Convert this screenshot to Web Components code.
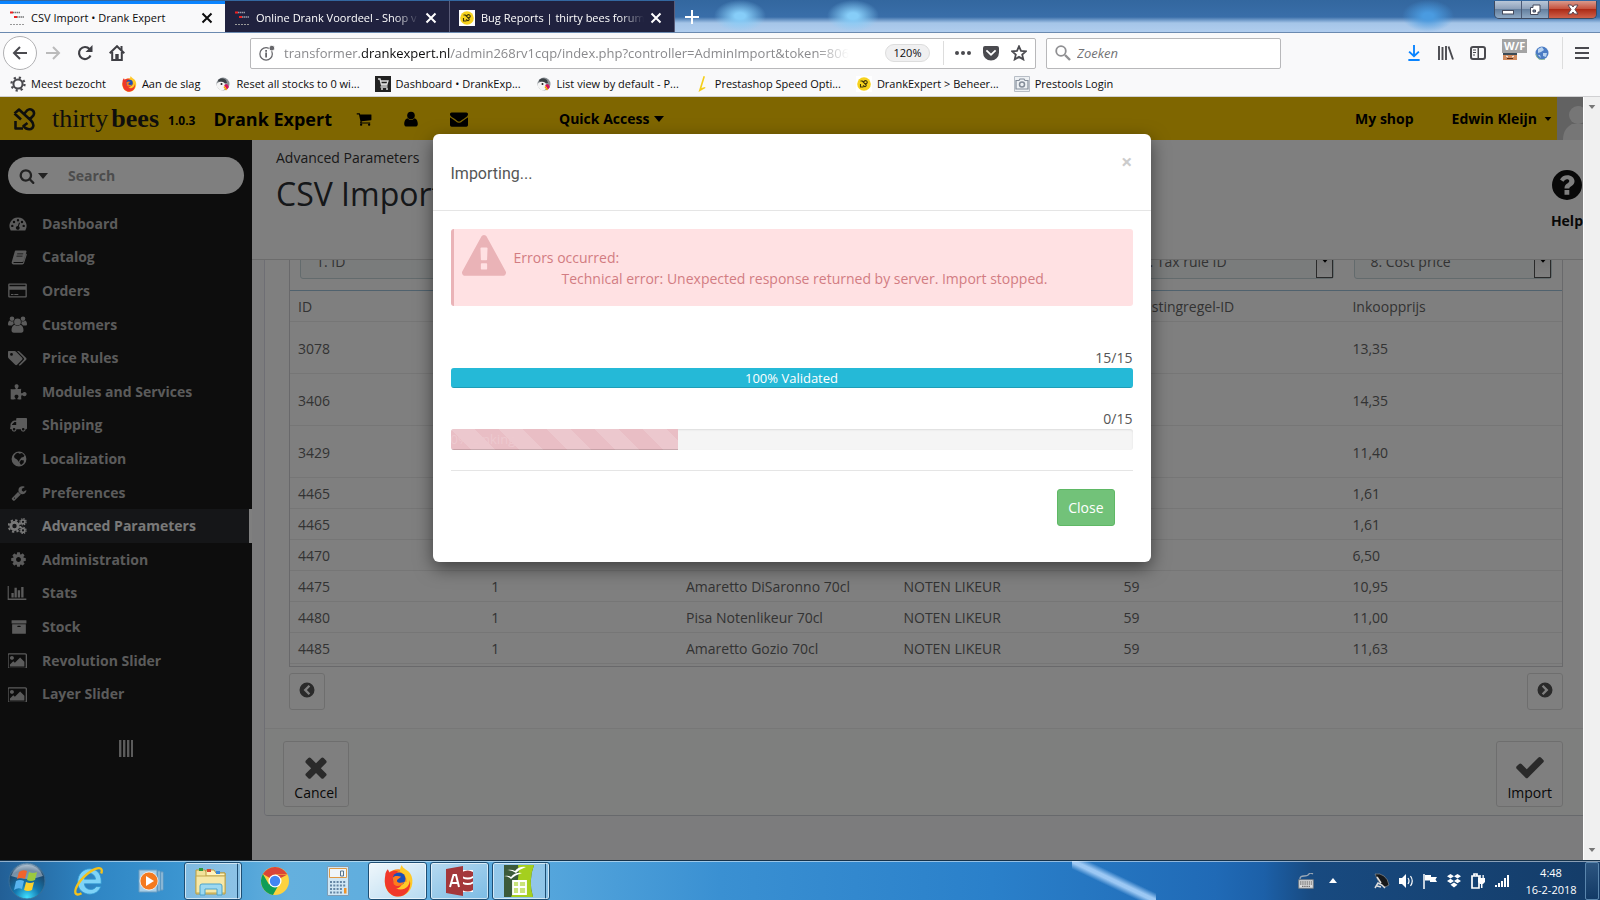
<!DOCTYPE html>
<html lang="en">
<head>
<meta charset="utf-8">
<title>CSV Import • Drank Expert</title>
<style>
  html, body { height: 100%; margin: 0; }
  body { font: 14px/20px "Open Sans", "Noto Sans", sans-serif; color: #666; overflow: hidden; }
</style>
</head>
<body>
<desktop-shell></desktop-shell>

<script>
const glyphs = {
  search: ['0 0 1792 1792', '<path d="M1216 832q0-185-131.5-316.5t-316.5-131.5-316.5 131.5-131.5 316.5 131.5 316.5 316.5 131.5 316.5-131.5 131.5-316.5zm512 832q0 52-38 90t-90 38q-54 0-90-38l-343-342q-179 124-399 124-143 0-273.5-55.5t-225-150-150-225-55.5-273.5 55.5-273.5 150-225 225-150 273.5-55.5 273.5 55.5 225 150 150 225 55.5 273.5q0 220-124 399l343 343q37 37 37 90z"/>'],
  envelope: ['0 0 1792 1792', '<path d="M1792 710v794q0 66-47 113t-113 47h-1472q-66 0-113-47t-47-113v-794q44 49 101 87 362 246 497 345 57 42 92.5 65.5t94.5 48 110 24.5h2q51 0 110-24.5t94.5-48 92.5-65.5q170-123 498-345 57-39 100-87zm0-294q0 79-49 151t-122 123q-376 261-468 325-10 7-42.5 31t-54 38.5-52 32.5-57.5 27-50 9h-2q-23 0-50-9t-57.5-27-52-32.5-54-38.5-42.5-31q-91-64-262-182.5t-205-142.5q-62-42-117-115.5t-55-136.5q0-78 41.5-130t118.5-52h1472q65 0 112.5 47t47.5 113z"/>'],
  cart: ['0 0 1792 1792', '<path d="M704 1536q0 52-38 90t-90 38-90-38-38-90 38-90 90-38 90 38 38 90zm896 0q0 52-38 90t-90 38-90-38-38-90 38-90 90-38 90 38 38 90zm128-1088v512q0 24-16.5 42.5t-40.5 21.5l-1044 122q13 60 13 70 0 16-24 64h920q26 0 45 19t19 45-19 45-45 19h-1024q-26 0-45-19t-19-45q0-11 8-31.5t16-36 21.5-40 15.5-29.5l-177-823h-204q-26 0-45-19t-19-45 19-45 45-19h256q16 0 28.5 6.5t19.5 15.5 13 24.5 8 26 5.5 29.5 4.5 26h1201q26 0 45 19t19 45z"/>'],
  user: ['0 0 16 16', '<circle cx="8" cy="4.6" r="3.8"/><path d="M4.6 7.2C2 7.8 1.2 10.500 1.200 13c0 1.600 1 2.600 2.600 2.600h8.400c1.600 0 2.600-1 2.600-2.600 0-2.500-.8-5.200-3.400-5.800C10.500 8.300 9.300 9 8 9S5.500 8.300 4.600 7.200z"/>'],
  times: ['0 0 1792 1792', '<path d="M1490 1322q0 40-28 68l-136 136q-28 28-68 28t-68-28l-294-294-294 294q-28 28-68 28t-68-28l-136-136q-28-28-28-68t28-68l294-294-294-294q-28-28-28-68t28-68l136-136q28-28 68-28t68 28l294 294 294-294q28-28 68-28t68 28l136 136q28 28 28 68t-28 68l-294 294 294 294q28 28 28 68z"/>'],
  check: ['0 0 1792 1792', '<path d="M1671 566q0 40-28 68l-724 724-136 136q-28 28-68 28t-68-28l-136-136-362-362q-28-28-28-68t28-68l136-136q28-28 68-28t68 28l294 295 656-657q28-28 68-28t68 28l136 136q28 28 28 68z"/>'],
  warning: ['0 0 1792 1792', '<path d="M1024 1375v-190q0-14-9.5-23.5t-22.5-9.5h-192q-13 0-22.5 9.5t-9.5 23.5v190q0 14 9.5 23.5t22.5 9.5h192q13 0 22.5-9.5t9.5-23.5zm-2-374l18-459q0-12-10-19-13-11-24-11h-220q-11 0-24 11-10 7-10 21l17 457q0 10 10 16.5t24 6.5h185q14 0 23.5-6.5t10.5-16.5zm-14-934l768 1408q35 63-2 126-17 29-46.500 46t-63.500 17h-1536q-34 0-63.500-17t-46.500-46q-37-63-2-126l768-1408q17-31 47-49t65-18 65 18 47 49z"/>'],
  wrench: ['0 0 1792 1792', '<path d="M448 1472q0-26-19-45t-45-19-45 19-19 45 19 45 45 19 45-19 19-45zm644-420l-682 682q-37 37-90 37-52 0-91-37l-106-108q-38-36-38-90 0-53 38-91l681-681q39 98 114.5 173.5t173.5 114.5zm634-435q0 39-23 106-47 134-164.5 217.5t-258.5 83.5q-185 0-316.5-131.5t-131.5-316.5 131.5-316.5 316.5-131.5q58 0 121.5 16.5t107.5 46.5q16 11 16 28t-16 28l-293 169v224l193 107q5-3 79-48.5t135.5-81 70.5-35.5q15 0 23.5 10t8.5 25z"/>'],
  cog: ['0 0 1792 1792', '<path d="M1152 896q0-106-75-181t-181-75-181 75-75 181 75 181 181 75 181-75 75-181zm512-109v222q0 12-8 23t-20 13l-185 28q-19 54-39 91 35 50 107 138 10 12 10 25t-9 23q-27 37-99 108t-94 71q-12 0-26-9l-138-108q-44 23-91 38-16 136-29 186-7 28-36 28h-222q-14 0-24.500-8.500t-11.500-21.500l-28-184q-49-16-90-37l-141 107q-10 9-25 9-14 0-25-11-126-114-165-168-7-10-7-23 0-12 8-23 15-21 51-66.500t54-70.500q-27-50-41-99l-183-27q-13-2-21-12.500t-8-23.500v-222q0-12 8-23t19-13l186-28q14-46 39-92-40-57-107-138-10-12-10-24 0-10 9-23 26-36 98.500-107.500t94.500-71.500q13 0 26 10l138 107q44-23 91-38 16-136 29-186 7-28 36-28h222q14 0 24.500 8.500t11.500 21.500l28 184q49 16 90 37l142-107q9-9 24-9 13 0 25 10 129 119 165 170 7 8 7 22 0 12-8 23-15 21-51 66.500t-54 70.500q26 50 41 98l183 28q13 2 21 12.500t8 23.500z"/>'],
  cogs: ['0 0 19 16', '<circle cx="6.500" cy="8" r="3.600" fill="none" stroke="currentColor" stroke-width="2.800"/><circle cx="6.500" cy="8" r="5.800" fill="none" stroke="currentColor" stroke-width="2" stroke-dasharray="2.300 2.255"/><g fill="none" stroke="currentColor"><circle cx="15" cy="3.800" r="1.900" stroke-width="1.500"/><circle cx="15" cy="3.800" r="3.100" stroke-width="1.200" stroke-dasharray="1.400 1.035"/><circle cx="15" cy="12.400" r="1.900" stroke-width="1.500"/><circle cx="15" cy="12.400" r="3.100" stroke-width="1.200" stroke-dasharray="1.400 1.035"/></g>'],
  dashboard: ['0 0 18 16', '<path fill-rule="evenodd" d="M9 1.500a8.500 8.500 0 0 0-7.300 12.900h14.600A8.500 8.500 0 0 0 9 1.500zM3.300 8.700a1.200 1.200 0 1 0 0 2.400 1.200 1.200 0 0 0 0-2.400zM5 4.800a1.200 1.200 0 1 0 0 2.400 1.200 1.200 0 0 0 0-2.400zM9 3a1.200 1.200 0 1 0 0 2.400A1.200 1.200 0 0 0 9 3zm4 1.800a1.200 1.200 0 1 0 0 2.400 1.200 1.200 0 0 0 0-2.400zm1.700 3.900a1.200 1.200 0 1 0 0 2.400 1.200 1.200 0 0 0 0-2.400zM10 6.500 8.800 10a1.900 1.900 0 1 0 1 .3L11 7z"/>'],
  book: ['0 0 16 16', '<path fill-rule="evenodd" d="M5 1.500h9.300c.9 0 1.400.6 1.100 1.400L12.500 12c-.2.700-.9 1.100-1.600 1.100H3c-.7 0-.9.600 0 .900h9l3-9.500c.800.400.9.900.7 1.600L13 14.300c-.2.700-.9 1.200-1.600 1.200H2.500C1 15.500.3 14 .8 12.700L3.700 2.700C3.900 2 4.300 1.500 5 1.500zm1.300 3-.2.800h6l.2-.8zm-.7 2.200-.2.800h6l.2-.8z"/>'],
  card: ['0 0 19 15', '<path fill-rule="evenodd" d="M1.200.500h16.600q1 0 1 1v12q0 1-1 1H1.200q-1 0-1-1v-12q0-1 1-1zm.3 1.200v1.500h16V1.700zm0 5v6.600h16V6.700zM3 11h2.500v1H3zm3.300 0h4v1h-4z"/>'],
  users: ['0 0 19 17', '<circle cx="9.500" cy="6" r="3.400"/><circle cx="4" cy="2.800" r="2.300"/><circle cx="15" cy="2.800" r="2.300"/><path d="M6.800 8.800C4.500 9.200 3.500 12 3.500 14.300c0 1.600.8 2.500 2.300 2.500h7.400c1.500 0 2.300-.9 2.300-2.500 0-2.300-1-5.100-3.300-5.500-1.600 1.700-3.800 1.700-5.400 0zM1.800 4.500C.5 5 0 6.500 0 8.200 0 9 .5 9.500 1.200 9.500h2.900c.5-.8 1-1.200 1.700-1.500A4.600 4.600 0 0 1 5.500 5c-1.200.7-2.600.5-3.700-.5zm15.400 0c1.300.5 1.800 2 1.800 3.700 0 .8-.5 1.300-1.200 1.300h-2.900c-.5-.8-1-1.200-1.700-1.500a4.600 4.600 0 0 0 .3-3c1.200.7 2.600.5 3.700-.5z"/>'],
  tags: ['0 0 19 15', '<path fill-rule="evenodd" d="M1 0h5.500c.6 0 1.200.300 1.600.700l6 6.100c.6.600.6 1.300 0 1.900l-5 5.100c-.6.500-1.300.5-1.900 0L.800 7.500C.300 7 0 6.400 0 5.800V1c0-.6.400-1 1-1zm2.500 2a1.400 1.400 0 1 0 0 2.800 1.400 1.400 0 0 0 0-2.800zM9 0h1c.7 0 1.300.3 1.700.7l6.500 6.200c.5.600.5 1.200 0 1.800l-5.400 5.400c-.8.700-1.500.5-2.100-.1l5-5.200c.5-.6.5-1.300 0-1.900z"/>'],
  puzzle: ['0 0 17 16', '<path d="M5.800 5C5.600 4 4.600 3.600 4.600 2.300 4.600.900 5.700.300 6.600.300s2 .6 2 2C8.600 3.500 7.600 4 7.500 5c1 .2 2.700 0 3.700-.2-.1 1.500-.4 3-.1 4 .2.800 1 .6 1.500.1.600-.6 1.300-.9 2-.9 1.300 0 2 1 2 2s-.7 2.200-2 2.200c-.8 0-1.300-.4-1.900-.8-.8-.5-1.400-.2-1.500.6-.1 1.100 0 2.300.2 3.200-1.600.3-3 .3-4.100.1-.3-1.300 1.200-1.500 1.200-2.900 0-1-.8-1.700-2-1.700s-2 .7-2 1.700c0 1.400 1.500 1.600 1.100 2.900-1.500.2-3 .2-4.900-.1V5c1.800.3 3.600.2 5.100 0z"/>'],
  truck: ['0 0 17 14', '<path fill-rule="evenodd" d="M7 0h9.200c.5 0 .8.300.8.800v9.500c0 .8-.7 1-1.400 1a2.400 2.400 0 1 1-4.800 0H6.500a2.400 2.400 0 1 1-4.800 0C.800 11.300 0 11.200 0 10.300c0-.5.500-.8.500-1.200 0-2-.2-3.400.7-4.400l1.600-1.600c.4-.4.900-.6 1.500-.6h1.900V.800C6.200.300 6.500 0 7 0zM6.200 4H4.400L2 6.400v.5h4.200zM4.100 10a1.300 1.300 0 1 0 0 2.600 1.300 1.300 0 0 0 0-2.600zm9.100 0a1.300 1.300 0 1 0 0 2.600 1.300 1.300 0 0 0 0-2.600z"/>'],
  globe: ['0 0 16 16', '<path fill-rule="evenodd" d="M8 .600a7.400 7.400 0 1 0 0 14.800A7.400 7.400 0 0 0 8 .600zM5 2.500l2-.700 1.500 1L11 2l2.500 2.500-1 1.500-2 .5L8.500 9 8 11 6 8.500 3.500 7 3 5zM10 9l3 .5-.5 2.500L10 14l-1.500-2.500z"/>'],
  chart: ['0 0 20 15', '<path d="M0 0h1.200v13.500H20V15H0zM4 7.500h2.500v4.800H4zM7.300 2h2.500v10.300H7.300zM10.800 4.500h2.500v7.800h-2.500zM14.500 1H17v11.300h-2.500z"/>'],
  archive: ['0 0 1792 1792', '<path d="M1088 832q0-26-19-45t-45-19h-256q-26 0-45 19t-19 45 19 45 45 19h256q26 0 45-19t19-45zm576-192v960q0 26-19 45t-45 19h-1408q-26 0-45-19t-19-45v-960q0-26 19-45t45-19h1408q26 0 45 19t19 45zm64-448v256q0 26-19 45t-45 19h-1536q-26 0-45-19t-19-45v-256q0-26 19-45t45-19h1536q26 0 45 19t19 45z"/>'],
  image: ['0 128 1856 1408', '<path d="M576 576q0 80-56 136t-136 56-136-56-56-136 56-136 136-56 136 56 56 136zm1024 384v448h-1408v-192l320-320 160 160 512-512zm96-704h-1600q-13 0-22.500 9.500t-9.500 22.500v1216q0 13 9.500 22.500t22.500 9.500h1600q13 0 22.500-9.500t9.500-22.500v-1216q0-13-9.500-22.500t-22.500-9.500zm160 32v1216q0 66-47 113t-113 47h-1600q-66 0-113-47t-47-113v-1216q0-66 47-113t113-47h1600q66 0 113 47t47 113z"/>'],
  prev: ['0 0 16 16', '<path fill-rule="evenodd" d="M8 .500a7.500 7.500 0 1 0 0 15 7.500 7.500 0 0 0 0-15zM9.600 3 11.200 4.600 7.900 8l3.300 3.400L9.600 13l-5-5z"/>'],
  next: ['0 0 16 16', '<path fill-rule="evenodd" d="M8 .500a7.500 7.500 0 1 1 0 15 7.500 7.500 0 0 1 0-15zM6.400 3 4.800 4.600 8.100 8l-3.300 3.400L6.400 13l5-5z"/>'],
  help: ['0 0 30 30', '<path fill-rule="evenodd" d="M15 0a15 15 0 1 0 0 30 15 15 0 0 0 0-30zM12.500 20h4.800v4.800h-4.800zM8 9.500C9.500 6.700 12 5.200 15.300 5.200c4 0 7.200 2.600 7.200 6 0 4.800-5.200 5-5.200 7.300h-4.800c0-5.300 4.800-5 4.800-7.600 0-1-1-1.700-2.300-1.700-1.500 0-2.500.9-3.600 2.500z"/>'],
  caret: ['0 0 10 6', '<path d="M0 0h10L5 6z"/>'],
  close: ['0 0 12 12', '<path d="M1.500 1.500 10.500 10.500M10.500 1.500 1.500 10.500" fill="none" stroke="currentColor" stroke-width="2"/>'],
  plus: ['0 0 14 14', '<path d="M7 0v14M0 7h14" fill="none" stroke="currentColor" stroke-width="2"/>'],
  back: ['0 0 16 16', '<path d="M15 8H2M8 2 2 8l6 6" fill="none" stroke="currentColor" stroke-width="2"/>'],
  forward: ['0 0 16 16', '<path d="M1 8h13M8 2l6 6-6 6" fill="none" stroke="currentColor" stroke-width="2"/>'],
  reload: ['0 0 16 16', '<path d="M13.500 10.500A6 6 0 1 1 12.500 4l1.500 1.800" fill="none" stroke="currentColor" stroke-width="2.200"/><path d="M15.500 0v7H8.500z"/>'],
  home: ['0 0 16 16', '<path d="M.700 8.300 8 1.200l7.300 7.100M3.200 7v8h9.600V7" fill="none" stroke="currentColor" stroke-width="2"/><path d="M6.300 9h3.400v6H6.300zM11.500 1h2v4h-2z"/>'],
  info: ['0 0 18 18', '<circle cx="8" cy="10" r="7" fill="none" stroke="currentColor" stroke-width="1.400"/><path d="M7 8.500h2V14H7zM7 5.500h2v2H7z"/><circle cx="14.500" cy="3.500" r="3.200" stroke="#fff"/>'],
  dots: ['0 0 16 4', '<circle cx="2" cy="2" r="2"/><circle cx="8" cy="2" r="2"/><circle cx="14" cy="2" r="2"/>'],
  pocket: ['0 0 16 15', '<path fill-rule="evenodd" d="M2 .500h12q2 0 2 2V7a8 8 0 0 1-16 0V2.500q0-2 2-2zm2 3.700L2.800 5.500 8 10.600l5.200-5.100L12 4.200 8 8z"/>'],
  star: ['0 0 16 16', '<path d="m8 1.300 2 4.500 4.900.5-3.700 3.300 1.100 4.800L8 11.900l-4.300 2.500 1.100-4.800L1.100 6.300 6 5.800z" fill="none" stroke="currentColor" stroke-width="1.800"/>'],
  lens: ['0 0 16 16', '<path d="M10 10l5 5" stroke="currentColor" stroke-width="2.400"/><circle cx="6" cy="6" r="4.800" fill="none" stroke="currentColor" stroke-width="1.800"/>'],
  download: ['0 0 14 17', '<path d="M7 0v12M1.800 7 7 12l5.200-5M1 16h12" fill="none" stroke="currentColor" stroke-width="2"/>'],
  library: ['0 0 16 14', '<path d="M1 0v14M4.500 1v13M8 0v14M10.500.500l4.500 13" fill="none" stroke="currentColor" stroke-width="1.900"/>'],
  sidebar: ['0 0 16 14', '<rect x="1" y="1" width="14" height="12" rx="2" fill="none" stroke="currentColor" stroke-width="2"/><path d="M7.500 1h1.500v12H7.500zM3 3.500h3v1H3zM3 6h3v1H3zM3 8.500h2v1H3z"/>'],
  menu: ['0 0 14 12', '<path d="M0 0h14v2H0zM0 5h14v2H0zM0 10h14v2H0z"/>'],
  addon: ['0 0 16 16', '<path d="M1 2h14v13H1z" fill="#d08b5e"/><path d="M1 2h14v8H1z" fill="#3b4a55"/><path d="M4 11l2 1M12 11l-2 1" stroke="#fff"/><path d="M5 13.500h6" stroke="#5c2f18"/>'],
  world: ['0 0 14 14', '<circle cx="7" cy="7" r="6.500" fill="#4b7cc4"/><path d="M3 3l4-2 2 3-3 2-3 1zM8 7l4 0-1 4-3-1zM3 9l2 0 1 3z" fill="#b9d3ef"/><path d="M1 8a6 6 0 0 0 9 5" fill="none" stroke="#7fae8a"/>'],
  shop: ['0 0 16 16', '<path d="M1 2.500h3M5 7h3" stroke="#e22" stroke-width="2"/><path d="M4 2.500h7M8 7h7" stroke="currentColor" stroke-width="1.400" stroke-dasharray="1.500 .500" opacity=".550"/><path d="M1 14.500h14" stroke="#999" stroke-width="1" stroke-dasharray="2 1"/>'],
  bee: ['0 0 16 16', '<path d="M0 0h16v16H0z" fill="#fff"/><circle cx="8" cy="8" r="6.800" fill="#f7d21e"/><path d="M4.500 5h1.800l3.500 3.500c1 1 0 2.500-1.300 2L7 9.500M7.500 6l1-1C10 4 12 5.500 11 7L9.500 8M4.500 8v3h3" fill="none" stroke="#3a3208" stroke-width="1.100"/>'],
  gear: ['0 0 14 14', '<g fill="none" stroke="#4a4a4f"><circle cx="7" cy="7" r="4" stroke-width="1.800"/><circle cx="7" cy="7" r="5.700" stroke-width="2" stroke-dasharray="1.900 2.577"/></g>'],
  puffin: ['0 0 16 16', '<circle cx="8" cy="8" r="6.500" fill="#8b9196"/><path d="M3 4q4-3.500 8 0l1 3H4z" fill="#3c4246"/><path d="M1.500 9a4.500 3.500 0 0 1 8-2l1.500 5-3 2.500a6.500 6.500 0 0 1-6.500-5.500z" fill="#f4f4f4"/><circle cx="6.500" cy="8" r="1" fill="#222"/><path d="M9 9l3-1 2 3-2 2.500z" fill="#d6145a"/><path d="M9 10.500 11.500 14" stroke="#f7a600" stroke-width="1.400"/>'],
  tile: ['0 0 16 16', '<path d="M0 0h16v16H0z" fill="#222"/><path d="M3 3h2l1.500 6h6M5.500 5H13l-1 3H6.500M5.500 11h7" fill="none" stroke="#ddd" stroke-width="1.300"/><circle cx="7" cy="13" r="1" fill="#ddd"/><circle cx="12" cy="13" r="1" fill="#ddd"/>'],
  slash: ['0 0 8 16', '<path d="M5.500 0 7 .500 3.500 12 7 11l.500 1L.500 16z" fill="#f5cf1b"/>'],
  camera: ['0 0 16 16', '<path d="M.500.500h15v15H.500z" fill="#eef1f4" stroke="#b8bec6"/><path d="M2 4.500h3l1-1.500h4l1 1.500h3V13H2z" fill="none" stroke="#848d99" stroke-width="1.200"/><circle cx="8" cy="8.500" r="2.500" fill="none" stroke="#848d99" stroke-width="1.500"/>'],
  firefox: ['0 0 28 30', '<circle cx="14" cy="16" r="12" fill="#ff8a16"/><path d="M2 12C0 22 6 29.500 14 29.500S28 23 27.500 14c-.5-5-3-8-6-9.500C18 2 18 1 17.500 0c-2 3-1 5-2 6 4 2 7 5 6.500 10z" fill="#ffc928"/><path d="M2 10c0-3 1.500-5 2.500-6l1.500 3C9 5 12 5 14 6l-2 4-3 2c1 4 6 4 9 2 1 5-3 8-6 8 8 3 13-2 13-8 2 8-3 15.500-11 15.500S0 21 2 10z" fill="#f0382b"/><circle cx="15" cy="13" r="6" fill="#1b4fb8"/><path d="M9 12c3-3 6-1 8-1-2 2-4 2-4 4s4 2 7 1c-2 4-7 5-10 2z" fill="#ff7b1c"/>'],
  minimize: ['0 0 14 12', '<rect x="1.500" y="6.500" width="11" height="3.500" fill="#fff" stroke="#444a5c"/>'],
  restore: ['0 0 14 12', '<path d="M5 1h7v7h-2v2.500H2.500V3.500H5z" fill="#fff" stroke="#444a5c"/><path d="M5 6h2.500v2H5z" fill="#7890b0" stroke="#444a5c"/>'],
  exit: ['0 0 14 12', '<path d="M2 1h3.500L7 3l1.500-2H12L9 5.500 12 10H8.500L7 8l-1.500 2H2l3-4.500z" fill="#fff" stroke="#5b4550"/>'],
  emblem: ['0 0 23 24', '<path d="M1.500 6.500 6 2.500 18 13.500c4 4 2.500 8.500-1.500 8.800-2.500.2-4.500-1.300-6-3.300l4-3M11.500 6.500 14 3.500c3.500-3 8.500.5 6.500 4.800L17 12M1.500 6.500l6.500 6M2.500 14v7.500h7.500" fill="none" stroke="#1d1d1b" stroke-width="2.600" stroke-linejoin="round"/>'],
  person: ['0 0 27 43', '<path d="M0 0h27v43H0z" fill="#c4c4c4"/><circle cx="21" cy="18" r="9" fill="#ededed"/><path d="M6 43c0-9 4-13 9-16h13v16z" fill="#ededed"/>'],
  orb: ['0 0 38 38', '<defs><radialGradient id="o" cx=".5" cy=".95" r="1"><stop offset="0" stop-color="#3fe0ff"/><stop offset=".35" stop-color="#1478b0"/><stop offset=".75" stop-color="#1c4468"/><stop offset="1" stop-color="#b8d0e2"/></radialGradient></defs><circle cx="19" cy="19" r="18" fill="url(#o)" stroke="#3a6f98"/><path d="M3 14a17 17 0 0 1 32 0q-16 6-32 0z" fill="#fff" opacity=".4"/><path d="M11 10q4-3 8-1l-2 8q-4-2-8 0z" fill="#f0642c"/><path d="M21 10q4 2 8 0l-2 8q-4 2-8 0z" fill="#9bc93f"/><path d="M8 19q4-2 8 0l-2 8q-4-2-8 1z" fill="#58b4ee"/><path d="M18 20q4 2 8 0l-2 8q-4 2-8 0z" fill="#fbd12d"/>'],
  explorer: ['0 0 32 32', '<path fill-rule="evenodd" d="M17 3c7 0 12 5 12 13v3H11c.5 4 3 6 6.500 6 3 0 5-1 6-3h5c-2 5-6 8-11.500 8C9.500 30 4 25 4 17S9.500 3 17 3zm-6 11h12c-.5-4-3-6-6-6s-5.500 2-6 6z" fill="#7fd3f7" stroke="#2f97d0" stroke-width=".800"/><path d="M29 8c2-5-1-7-6-5C15 6 5 16 2 24c-2 6 1 8 6 5" fill="none" stroke="#f5c21a" stroke-width="2.500"/>'],
  player: ['0 0 28 26', '<path d="M1 2h18v22H1zM20 3h2v20h-2zM23 4h2v18h-2z" fill="#a8cfe8" stroke="#6a9cc0"/><circle cx="11" cy="13" r="9" fill="#f47a1f" stroke="#fff" stroke-width=".700"/><path d="M8 8l8 5-8 5z" fill="#fff"/>'],
  folder: ['0 0 32 32', '<path d="M1 5h9l2 3h18v21H1z" fill="#f2e29a" stroke="#b99c3f"/><path d="M11 5h8l2 3h9v3H11z" fill="#fff4bd" stroke="#b99c3f"/><path d="M4 3h4v3H4z" fill="#2f9a3a"/><path d="M21 6h4v3h-4z" fill="#3d8ad8"/><path d="M12 4h4v3h-4z" fill="#d8472f"/><path d="M1 11h29v17H1z" fill="#f6e8a8" stroke="#c2a84e"/><path d="M5 30V21q0-2 2-2h18q2 0 2 2v9h-5v-6H10v6z" fill="#9cd8f0" stroke="#4aa3cc"/>'],
  chrome: ['0 0 30 30', '<circle cx="15" cy="15" r="14" fill="#fdd23f"/><path d="M15 15 2.900 8A14 14 0 0 1 27.100 8H15z" fill="#db4437"/><path d="M15 15l-6 3.500L2.900 8a14 14 0 0 0 10 20.900l6-10.400z" fill="#0f9d58"/><path d="M15 8.500h12.400L15 15z" fill="#db4437"/><circle cx="15" cy="15" r="6.500" fill="#fff"/><circle cx="15" cy="15" r="5.200" fill="#4285f4"/>'],
  calc: ['0 0 22 30', '<path d="M.500.500h21v29H.500z" fill="#cfe6f4" stroke="#7d9db5"/><path d="M2.500 2.500h17v9h-17z" fill="#f0f6fa" stroke="#e09a45"/><path d="M13.500 5h3v5h-3z" fill="none" stroke="#56738c"/><path d="M3 16h16M3 19.500h16M3 23h12M3 26.500h12" stroke="#6486a4" stroke-width="2" stroke-dasharray="2 1.300"/><path d="M17 22h2.500v5.500H17z" fill="#f09326"/>'],
  access: ['0 0 30 32', '<path d="M16 5h12v22H16z" fill="#fff"/><path d="M17 7q6-3 11 0v4q-5 3-11 0zM17 13q6 3 11 0v3.500q-5 3-11 0zM17 18.500q6 3 11 0V25q-5 3-11 0z" fill="#a4373a"/><path d="M1 4l17-3v30L1 28z" fill="#a4373a"/><path d="M5 22l3.500-12h2.500L14 22M6.500 18h6" fill="none" stroke="#fff" stroke-width="2"/>'],
  sheet: ['0 0 32 34', '<path d="M1 1h30q-6 15-1 32H1z" fill="#3c5a3a"/><path d="M15 1h16q-6 16-1 32H8Q18 16 15 1z" fill="#a5cf1e"/><path d="M10 17h13v13H10zM16 17v13M10 23h13" fill="#c9e37a" stroke="#fff" stroke-width="1.800"/><path d="M4 6q5-1 8 1 4-5 11-4-6 2-10 6-4-3-9-3zM1 12q5-1 7 1 4-5 11-4-7 2-11 6-3-3-7-3z" fill="#fff"/>'],
  keyboard: ['0 0 16 16', '<path d="M.700 6.700h14.600v8.600H.700z" fill="#ddd" stroke="#6f7a85"/><path d="M2 9h12M2 11h12M4 13.300h8" stroke="#555" stroke-dasharray="1.500 .700"/><path d="M2 6q0-3 4-3t5-2 4 0" fill="none" stroke="#9aa7b5" stroke-width="1.300"/>'],
  up: ['0 0 8 5', '<path d="M4 0l4 5H0z" fill="#fff"/>'],
  dish: ['0 0 16 16', '<path d="M1 1q5-1 9 2t5 9q-3 2-5 2Q3 8 1 1z" fill="#15181b" stroke="#8a8f93" stroke-width=".700"/><path d="M3 4l4 6M1 15l3-5 4 2 3 3M3 13l4 1" stroke="#ddd" stroke-width="1.500" fill="none"/>'],
  speaker: ['0 0 16 16', '<path d="M1 5h3l4-4v14l-4-4H1z" fill="#fff"/><path d="M10 5q2 3 0 6M12.500 3q3.500 5 0 10" fill="none" stroke="#fff" stroke-width="1.200"/>'],
  flag: ['0 0 16 16', '<path d="M2 1v15" stroke="#fff" stroke-width="1.500"/><path d="M3 2h6v2h6l-1.500 2.500L15 9H8V7.500H3z" fill="#fff"/>'],
  dropbox: ['0 0 16 16', '<path d="M4.500 1 8 3.200 4.500 5.500 1 3.200zM11.500 1 15 3.200l-3.500 2.300L8 3.200zM4.500 5.800 8 8l-3.500 2.300L1 8zM11.500 5.800 15 8l-3.500 2.300L8 8zM8 9.500l3.500 2.300L8 14.500l-3.500-2.700z" fill="#fff"/>'],
  power: ['0 0 16 16', '<path d="M2 3h7v12H2zM4 1h3v2H4z" fill="none" stroke="#fff" stroke-width="1.700"/><path d="M8 5h7v4l-2 2h-3L8 9zM9.500 2h1.300v3H9.500zM12.500 2h1.300v3h-1.300zM11 11h1.500v4H11z" fill="#fff"/>'],
  signal: ['0 0 16 16', '<path d="M1 12h2v2H1zM4 10h2v4H4zM7 8h2v6H7zM10 5h2v9h-2zM13 2h2v12h-2z" fill="#fff"/>']
};

const define = (name, css, html, setup) => {
  const template = document.createElement('template');
  template.innerHTML = `<style>*{box-sizing:border-box}button,input,select{font:inherit;color:inherit;margin:0}a{color:inherit;text-decoration:none}${css}</style>${html}`;
  customElements.define(name, class extends HTMLElement {
    constructor() {
      super();
      this.attachShadow({ mode: 'open' }).append(template.content.cloneNode(true));
    }
    connectedCallback() { if (setup) setup(this, this.shadowRoot); }
  });
};

define('ui-icon',
  ':host{display:block;flex:none;width:16px;height:16px}svg{display:block;width:100%;height:100%;fill:currentColor}',
  '<svg aria-hidden="true"></svg>',
  (host, root) => {
    const [box, shapes] = glyphs[host.getAttribute('name')];
    const svg = root.querySelector('svg');
    svg.setAttribute('viewBox', box);
    svg.innerHTML = shapes;
  });

/* ---------- browser window ---------- */
define('browser-tab',
  `:host{display:flex;align-items:center;gap:6px;width:225px;padding:3px 12px 0 9px;background:#20223f;color:#fff;border-right:1px solid #5a5c78;font-size:11px}
   :host([active]){background:#f9f9fa;color:#0c0c0d;border-right:0;box-shadow:inset 0 3px #0a84ff}
   a{flex:1;min-width:0;white-space:nowrap;overflow:hidden}
   :host([fade]) a{-webkit-mask:linear-gradient(90deg,#000 85%,transparent);mask:linear-gradient(90deg,#000 85%,transparent)}
   button{display:flex;padding:0;border:0;background:none}button ui-icon{width:12px;height:12px}`,
  '<slot name="icon"></slot><a href="#"><slot></slot></a><button aria-label="Close tab"><ui-icon name="close"></ui-icon></button>');

define('title-strip',
  `:host{display:flex;height:33px;padding-top:1px;border-bottom:1px solid #6b8ab0;
     background:radial-gradient(ellipse 26px 16px at 740px 16px,#86cdf8 20%,transparent),radial-gradient(ellipse 26px 16px at 853px 16px,#86cdf8 20%,transparent),radial-gradient(ellipse 26px 16px at 1428px 16px,#4a9be0 20%,transparent),linear-gradient(#33679f 0,#396ea9 17px,#a5c5e8 23px,#b0cdee)}
   .new{padding:0 10px;background:none;border:0;color:#fff;display:flex;align-items:center}
   .new ui-icon{width:14px;height:14px}
   .controls{display:flex;margin-left:auto;margin-right:3px;height:18px;border:1px solid #3d4a60;border-top:0;border-radius:0 0 5px 5px;overflow:hidden}
   .controls button{display:flex;justify-content:center;align-items:center;width:27px;padding:0;border:0;border-right:1px solid #4b5a75;background:linear-gradient(#b9c7d8,#8fa2bb 45%,#64809f 50%,#8fa9c4)}
   .controls button:last-child{width:47px;border:0;background:linear-gradient(#d99a8c,#c6533f 45%,#ad2b17 50%,#d0614a)}
   .controls ui-icon{width:14px;height:12px}`,
  `<browser-tab active><ui-icon slot="icon" name="shop"></ui-icon>CSV Import • Drank Expert</browser-tab>
   <browser-tab fade><ui-icon slot="icon" name="shop"></ui-icon>Online Drank Voordeel - Shop v</browser-tab>
   <browser-tab fade><ui-icon slot="icon" name="bee"></ui-icon>Bug Reports | thirty bees forum</browser-tab>
   <button class="new" aria-label="New tab"><ui-icon name="plus"></ui-icon></button>
   <div class="controls"><button aria-label="Minimize"><ui-icon name="minimize"></ui-icon></button><button aria-label="Restore"><ui-icon name="restore"></ui-icon></button><button aria-label="Close"><ui-icon name="exit"></ui-icon></button></div>`);

define('nav-toolbar',
  `:host{display:flex;align-items:center;height:40px;background:#f9f9fa;color:#4a4a4f;padding:0 5px 0 3px;font-size:13px}
   button{display:flex;flex:none;align-items:center;justify-content:center;background:none;border:0;padding:0;width:32px;height:32px}
   .back{width:34px;height:34px;border:1px solid #b1b1b3;border-radius:50%;background:#fff}
   .off{color:#bbb}.main{color:#3f3f44}
   .url,.find{display:flex;align-items:center;height:31px;background:#fff;border:1px solid #b8b8ba;border-radius:2px;min-width:0}
   .url{flex:786 1 786px;margin-left:117px;padding:0 2px 0 8px}
   .url>ui-icon{color:#66666a}.address{flex:1;min-width:0;margin-left:9px;white-space:nowrap;overflow:hidden;color:#8a8a8d;-webkit-mask:linear-gradient(90deg,#000 94%,transparent);mask:linear-gradient(90deg,#000 94%,transparent)}
   .address b{font-weight:400;color:#0c0c0d}
   .zoom{height:18px;width:45px;margin:0 13px 0 36px;border:1px solid #ddd;border-radius:9px;background:#f0f0f1;color:#0c0c0d;font-size:11px}
   .url .act{width:28px;border:0}.sep{width:1px;height:24px;background:#ddd;margin-right:5px}
   .find{flex:235 1 235px;margin-left:10px;padding:0 8px;gap:6px;color:#8f8f92}
   .find input{flex:1;min-width:0;border:0;padding:0;background:none;font-style:italic}input::placeholder{color:#737376;opacity:1}
   .tools{flex:none;display:flex;margin-left:117px}.wf{position:relative}
   .wf span{position:absolute;left:8px;top:2px;background:#a4a4a4;color:#fff;font-weight:700;font-size:11px;line-height:14px;padding:0 2px}
   .tools .end{border-left:1px solid #ddd;width:33px;margin-left:4px;padding-left:5px}`,
  `<button class="back" aria-label="Back"><ui-icon name="back"></ui-icon></button>
   <button class="off" aria-label="Forward"><ui-icon name="forward"></ui-icon></button>
   <button class="main" aria-label="Reload"><ui-icon name="reload"></ui-icon></button>
   <button class="main" aria-label="Home"><ui-icon name="home"></ui-icon></button>
   <div class="url"><ui-icon name="info"></ui-icon><div class="address">transformer.<b>drankexpert.nl</b>/admin268rv1cqp/index.php?controller=AdminImport&amp;token=806</div>
     <button class="zoom">120%</button><i class="sep"></i>
     <button class="act" aria-label="Page actions"><ui-icon name="dots" style="height:4px"></ui-icon></button>
     <button class="act" aria-label="Save to Pocket"><ui-icon name="pocket"></ui-icon></button>
     <button class="act" aria-label="Bookmark"><ui-icon name="star"></ui-icon></button></div>
   <label class="find"><ui-icon name="lens"></ui-icon><input placeholder="Zoeken" aria-label="Zoeken"></label>
   <div class="tools"><button style="color:#0a84ff" aria-label="Downloads"><ui-icon name="download"></ui-icon></button>
     <button aria-label="Library"><ui-icon name="library"></ui-icon></button>
     <button aria-label="Sidebars"><ui-icon name="sidebar"></ui-icon></button>
     <button class="wf"><ui-icon name="addon"></ui-icon><span>W/F</span></button>
     <button aria-label="World"><ui-icon name="world" style="width:14px;height:14px"></ui-icon></button>
     <button class="end" aria-label="Menu"><ui-icon name="menu" style="width:14px"></ui-icon></button></div>`);

define('book-mark', ':host{display:block}a{display:flex;align-items:center;gap:5px;white-space:nowrap}', '<a href="#"><slot name="icon"></slot><slot></slot></a>');
define('bookmark-bar',
  ':host{display:flex;align-items:center;gap:15px;height:24px;padding:0 10px 2px;background:#f9f9fa;border-bottom:1px solid #d0d0d2;box-sizing:border-box;color:#0c0c0d;font-size:11px}',
  `<book-mark><ui-icon slot="icon" name="gear"></ui-icon>Meest bezocht</book-mark>
   <book-mark><ui-icon slot="icon" name="firefox"></ui-icon>Aan de slag</book-mark>
   <book-mark><ui-icon slot="icon" name="puffin"></ui-icon>Reset all stocks to 0 wi...</book-mark>
   <book-mark><ui-icon slot="icon" name="tile"></ui-icon>Dashboard • DrankExp...</book-mark>
   <book-mark><ui-icon slot="icon" name="puffin"></ui-icon>List view by default - P...</book-mark>
   <book-mark><ui-icon slot="icon" name="slash"></ui-icon>Prestashop Speed Opti...</book-mark>
   <book-mark><ui-icon slot="icon" name="bee"></ui-icon>DrankExpert &gt; Beheer...</book-mark>
   <book-mark><ui-icon slot="icon" name="camera"></ui-icon>Prestools Login</book-mark>`);

define('scroll-bar',
  ':host{box-sizing:border-box;display:flex;flex-direction:column;justify-content:space-between;align-items:center;width:17px;padding:8px 0;background:#f0f0f0;border-left:1px solid #fff;color:#777}ui-icon{width:8px;height:4px}ui-icon:first-child{transform:rotate(180deg)}',
  '<ui-icon name="caret"></ui-icon><ui-icon name="caret"></ui-icon>');

/* ---------- shop back office ---------- */
define('shop-header',
  `:host{display:flex;align-items:center;height:43px;padding-left:13px;background:#fc0;color:#000;font-weight:700;white-space:nowrap}
   .brand{display:flex;align-items:center;gap:16px}.brand ui-icon{width:23px;height:24px}
   .word{font:400 26px/36px "Liberation Serif",serif;color:#1d1d1b}.word b{margin-left:3px}
   small{font-size:12px;margin-left:9px;padding-top:4px}.shop{font-size:18px;margin-left:18px}
   nav{display:flex;align-items:center;gap:31px;margin-left:24px}nav a{display:flex}
   .quick{margin-left:91px}.drop{display:flex;align-items:center;gap:5px}.drop ui-icon{width:10px;height:6px}
   .mine{margin-left:auto}.me{gap:7px;margin-left:38px;margin-right:5px}.me ui-icon{width:8px;height:4px}
   .face{width:26px;height:43px;overflow:hidden;display:flex}.face ui-icon{width:27px;height:43px}`,
  `<a class="brand" href="#" aria-label="thirty bees"><ui-icon name="emblem"></ui-icon><span class="word">thirty<b>bees</b></span></a><small>1.0.3</small>
   <a class="shop" href="#">Drank Expert</a>
   <nav><a href="#" aria-label="Orders"><ui-icon name="cart"></ui-icon></a><a href="#" aria-label="Customers"><ui-icon name="user"></ui-icon></a><a href="#" aria-label="Messages"><ui-icon name="envelope" style="width:18px;height:18px"></ui-icon></a></nav>
   <a class="quick drop" href="#">Quick Access<ui-icon name="caret"></ui-icon></a>
   <a class="mine" href="#">My shop</a><a class="me drop" href="#">Edwin Kleijn<ui-icon name="caret"></ui-icon></a>
   <span class="face"><ui-icon name="person"></ui-icon></span>`);

define('side-item',
  `:host{display:flex;color:#b6b6b6}a{display:flex;flex:1;align-items:center}.i{display:flex;justify-content:flex-end;width:27px;margin-right:15px;font-size:0}
   :host([active]){background:#2a2d31;color:#f2f2f2;border-right:3px solid #fff}`,
  '<a href="#"><span class="i"><slot name="icon"></slot></span><slot></slot></a>');

define('side-nav',
  `:host{display:flex;flex-direction:column;width:252px;flex:none;background:#1a1a1a;font-weight:700;overflow:hidden}
   .search{display:flex;align-items:center;flex:none;height:37px;margin:17px 8px 0;padding:0 11px;border-radius:19px;background:#fff;color:#444}
   .search ui-icon+ui-icon{width:10px;height:6px;margin-left:3px}
   input{flex:1;min-width:0;margin-left:20px;padding:0;border:0;background:none}input::placeholder{color:#999;opacity:1}
   nav{display:grid;grid-auto-rows:1fr;height:504px;margin-top:13px;flex:none}
   .fold{align-self:center;width:14px;height:17px;margin-top:29px;padding:0;border:0;background:repeating-linear-gradient(90deg,#b6b6b6 0 2px,#555 2px 3px,#1a1a1a 3px 4px)}`,
  `<label class="search"><ui-icon name="search"></ui-icon><ui-icon name="caret"></ui-icon><input placeholder="Search" aria-label="Search"></label><nav></nav><button class="fold" aria-label="Collapse menu"></button>`,
  (host, root) => {
    root.querySelector('nav').innerHTML = [
      ['dashboard', 'Dashboard', 18, 16], ['book', 'Catalog', 16, 16], ['card', 'Orders', 19, 15], ['users', 'Customers', 19, 17],
      ['tags', 'Price Rules', 19, 15], ['puzzle', 'Modules and Services', 17, 16], ['truck', 'Shipping', 17, 14], ['globe', 'Localization', 16, 16],
      ['wrench', 'Preferences', 16, 16], ['cogs', 'Advanced Parameters', 19, 16], ['cog', 'Administration', 17, 17], ['chart', 'Stats', 20, 14],
      ['archive', 'Stock', 16, 16], ['image', 'Revolution Slider', 19, 15], ['image', 'Layer Slider', 19, 15]
    ].map(([icon, label, w, h]) => `<side-item ${icon === 'cogs' ? 'active' : ''}><ui-icon slot="icon" name="${icon}" style="width:${w}px;height:${h}px"></ui-icon>${label}</side-item>`).join('');
  });

define('page-heading',
  `:host{box-sizing:border-box;display:flex;justify-content:space-between;flex:none;height:120px;padding:8px 0 0 24px;background:#fff;border-bottom:1px solid #d8d8d8;position:relative;z-index:1;color:#333}
   h1{margin:6px 0 0;font-weight:400;font-size:32px;line-height:40px;color:#2b2e33}
   .help{display:flex;flex-direction:column;align-items:center;gap:11px;align-self:flex-start;margin-top:22px;font-weight:700;color:#111}.help ui-icon{width:30px;height:30px}`,
  `<div><a href="#">Advanced Parameters</a><h1>CSV Import</h1></div><a class="help" href="#"><ui-icon name="help"></ui-icon>Help</a>`);

define('select-box',
  `:host{display:block;position:relative}select{display:block;width:100%;height:37px;padding:2px 34px 0 15px;border:1px solid #c7d6db;border-radius:3px;background:#f5f8f9;-webkit-appearance:none;appearance:none;color:#666}
   i{position:absolute;right:1px;top:1px;width:17px;height:35px;border:1px solid #555;background:linear-gradient(#ddd,#fff);display:flex;align-items:center;justify-content:center;color:#000;pointer-events:none}ui-icon{width:6px;height:4px}`,
  '<select></select><i><ui-icon name="caret"></ui-icon></i>',
  (host, root) => { root.querySelector('select').innerHTML = `<option>${host.getAttribute('value')}</option>`; root.querySelector('select').setAttribute('aria-label', host.getAttribute('value')); });

define('import-panel',
  `:host{display:block;margin:-28px 0 0 12px;border-left:1px solid #dcdce8;border-bottom:1px solid #cfd2d8;border-bottom-left-radius:4px;background:#fff;overflow:hidden}
   .body{padding:0 20px 18px 24px}
   .frame{border:1px solid #d3d3d6;border-top:0;padding-bottom:2px}
   table{width:100%;border-collapse:collapse;table-layout:fixed;color:#666}
   th,td{padding:2px 8px 0;text-align:left;font-weight:400;border-bottom:1px solid #ececec;height:31px;line-height:20px;white-space:nowrap}
   .pick th{padding:10px 10px 11px;border-bottom:1px solid #a0c4dc}.tall td{height:52px}
   .pager{display:flex;justify-content:space-between;margin-top:6px}
   button{border:1px solid #ddd;border-radius:3px;background:#fff;color:#555}
   .pager button{width:36px;height:37px;padding:0 0 3px;display:flex;align-items:center;justify-content:center}
   footer{display:flex;justify-content:space-between;height:87px;padding:12px 20px 0 18px;border-top:1px solid #eee;background:#fcfffd}
   footer button{display:flex;flex-direction:column;align-items:center;min-width:66px;height:66px;padding:9px 10px 0;color:#111}
   footer ui-icon{width:32px;height:32px;color:#555}`,
  `<div class="body"><div class="frame"><table><colgroup><col style="width:15.200%"><col style="width:15.300%"><col style="width:17.100%"><col style="width:17.300%"><col style="width:18%"><col></colgroup><thead></thead><tbody></tbody></table></div>
   <div class="pager"><button aria-label="Previous"><ui-icon name="prev"></ui-icon></button><button aria-label="Next"><ui-icon name="next"></ui-icon></button></div></div>
   <footer><button><ui-icon name="times"></ui-icon>Cancel</button><button><ui-icon name="check"></ui-icon>Import</button></footer>`,
  (host, root) => {
    const cells = list => list.map(v => `<td>${v}</td>`).join('');
    root.querySelector('thead').innerHTML = `<tr class="pick">${['1. ID', '', '', '', '7. Tax rule ID', '8. Cost price'].map(v => `<th>${v ? `<select-box value="${v}"></select-box>` : ''}</th>`).join('')}</tr>`;
    root.querySelector('tbody').innerHTML = [
      ['ID', '', '', '', 'Belastingregel-ID', 'Inkoopprijs'], ['3078', '', '', '', '', '13,35'], ['3406', '', '', '', '', '14,35'], ['3429', '', '', '', '', '11,40'],
      ['4465', '', '', '', '', '1,61'], ['4465', '', '', '', '', '1,61'], ['4470', '', '', '', '', '6,50'],
      ['4475', '1', 'Amaretto DiSaronno 70cl', 'NOTEN LIKEUR', '59', '10,95'],
      ['4480', '1', 'Pisa Notenlikeur 70cl', 'NOTEN LIKEUR', '59', '11,00'],
      ['4485', '1', 'Amaretto Gozio 70cl', 'NOTEN LIKEUR', '59', '11,63']
    ].map((row, i) => `<tr class="${i > 0 && i < 4 ? 'tall' : ''}">${cells(row)}</tr>`).join('');
  });

define('progress-meter',
  `:host{display:block}.count{text-align:right;line-height:20px;color:#555}
   .track{height:20px;border-radius:3px;background:#f5f5f5;box-shadow:inset 0 1px 2px rgba(0,0,0,.1);overflow:hidden}
   .fill{height:100%;background:#25b9d7;box-shadow:inset 0 -1px rgba(0,0,0,.15);color:#fff;font-size:13px;text-align:center}
   :host([failed]) .track{height:21px}
   :host([failed]) .fill{background:linear-gradient(45deg,rgba(255,255,255,.15) 25%,transparent 25% 50%,rgba(255,255,255,.15) 50% 75%,transparent 75%) 0 0/48px 48px,#e9bec5;text-align:left;color:#edc9cf}`,
  '<div class="count"></div><div class="track"><div class="fill"><slot></slot></div></div>',
  (host, root) => { root.querySelector('.count').textContent = host.getAttribute('count'); root.querySelector('.fill').style.width = host.getAttribute('amount'); });

define('modal-dialog',
  `:host{display:block;width:718px;border-radius:6px;background:#fff;box-shadow:0 6px 18px rgba(0,0,0,.5);color:#555}
   header{display:flex;justify-content:space-between;height:77px;padding:17px 18px 0;border-bottom:1px solid #e5e5e5}
   h4{margin:13px 0 0;font:400 16px/20px Roboto,sans-serif}header button{align-self:flex-start;padding:0;border:0;background:none;color:#ccc;font-size:20px;font-weight:700;line-height:22px}
   .body{padding:18px 18px 36px}
   .alert{display:flex;height:77px;padding:4px 8px;gap:8px;border-left:3px solid #eab3b7;border-radius:3px;background:#ffe1e3;color:#d27c82}
   .alert ui-icon{width:44px;height:44px;margin-top:2px;color:#eab3b7}.alert div{padding-top:14px;line-height:21px}.alert p{margin:0}.alert p+p{padding-left:48px}
   progress-meter{margin-top:21px}.first{margin-top:42px}
   footer{display:flex;justify-content:flex-end;margin-top:20px;padding:18px 18px 0;border-top:1px solid #e5e5e5}
   footer button{height:37px;padding:0 10px;border:1px solid #5fb865;border-radius:3px;background:#72c279;color:#fff}`,
  `<header><h4>Importing...</h4><button aria-label="Close dialog">×</button></header>
   <div class="body"><div class="alert" role="alert"><ui-icon name="warning"></ui-icon><div><p>Errors occurred:</p><p>Technical error: Unexpected response returned by server. Import stopped.</p></div></div>
   <progress-meter class="first" count="15/15" amount="100%">100% Validated</progress-meter>
   <progress-meter failed count="0/15" amount="33.300%">0% Linking</progress-meter>
   <footer><button>Close</button></footer></div>`);

define('shop-page',
  `:host{display:flex;flex-direction:column;position:relative;min-width:0;flex:1;overflow:hidden;background:#f8f8fa}
   .row{display:flex;flex:1;min-height:0}main{display:flex;flex-direction:column;flex:1;min-width:0;overflow:hidden}
   .veil{position:absolute;z-index:2;inset:0;display:flex;justify-content:center;align-items:flex-start;padding-top:37px;background:rgba(0,0,0,.5)}`,
  `<shop-header></shop-header><div class="row"><side-nav></side-nav><main><page-heading></page-heading><import-panel></import-panel></main></div>
   <div class="veil"><modal-dialog></modal-dialog></div>`);

/* ---------- desktop ---------- */
define('task-bar',
  `:host{box-sizing:border-box;display:flex;align-items:center;height:40px;flex:none;border-top:1px solid #16324a;box-shadow:inset 0 1px rgba(255,255,255,.5);color:#fff;font-size:11px;
     background:linear-gradient(to top right,transparent 40%,#9cc8f4 48% 52%,transparent 60%) 1072px 0/84px 40px no-repeat,linear-gradient(90deg,#225f96,#2f86c4 6%,#3d97d2 12%,#64b0de 18%,#5aaade 32%,#3a90d2 45%,#2a80ca 62%,#206ab6 76%,#1c60a8 79%,#184a80 82%,#143c68)}
   button{display:flex;flex:none;align-items:center;justify-content:center;width:62px;height:38px;padding:0;border:0;background:none}
   .orb{width:54px}.orb ui-icon{width:38px;height:38px}
   .open{border:1px solid #1d4e74;border-radius:3px;background:linear-gradient(150deg,rgba(255,255,255,.55),rgba(255,255,255,.2));box-shadow:inset 0 0 0 1px rgba(255,255,255,.6)}
   .on{background:linear-gradient(150deg,rgba(255,255,255,.9),rgba(255,255,255,.55))}
   .stack{width:58px;padding-right:4px;background:linear-gradient(90deg,rgba(255,255,255,.35) 52px,#1d4e74 52px 53px,rgba(255,255,255,.3) 53px)}
   .tray{display:flex;align-items:center;gap:8px;margin-left:auto}.tray ui-icon{width:16px;height:16px}
   time{text-align:center;line-height:17px;margin:0 6px 0 5px;width:56px;white-space:nowrap}
   .desk{width:14px;margin-right:1px;border:1px solid #5a86ad;border-radius:2px;background:linear-gradient(#2c5580,#123a66)}
   ui-icon{width:30px;height:32px}`,
  `<button class="orb" aria-label="Start"><ui-icon name="orb"></ui-icon></button>
   <button style="width:66px;padding-left:4px" aria-label="Internet Explorer"><ui-icon name="explorer"></ui-icon></button>
   <button style="width:64px" aria-label="Media Player"><ui-icon name="player" style="width:28px;height:26px"></ui-icon></button>
   <button class="open stack" aria-label="Folders"><ui-icon name="folder" style="width:32px"></ui-icon></button>
   <button style="width:66px" aria-label="Chrome"><ui-icon name="chrome"></ui-icon></button>
   <button style="width:60px" aria-label="Calculator"><ui-icon name="calc" style="width:22px;height:30px"></ui-icon></button>
   <button class="open on" style="width:59px" aria-label="Firefox"><ui-icon name="firefox"></ui-icon></button>
   <button class="open" style="width:59px;margin:0 3px" aria-label="Access"><ui-icon name="access"></ui-icon></button>
   <button class="open stack" aria-label="Calc"><ui-icon name="sheet" style="width:32px;height:34px"></ui-icon></button>
   <div class="tray"><ui-icon name="keyboard"></ui-icon><ui-icon name="up" style="width:8px;height:5px;margin:0 29px 0 7px"></ui-icon><ui-icon name="dish"></ui-icon><ui-icon name="speaker"></ui-icon><ui-icon name="flag"></ui-icon><ui-icon name="dropbox"></ui-icon><ui-icon name="power"></ui-icon><ui-icon name="signal"></ui-icon>
   <time>4:48<br>16-2-2018</time></div><button class="desk" aria-label="Show desktop"></button>`);

define('desktop-shell',
  ':host{display:flex;flex-direction:column;height:100vh}.view{display:flex;flex:1;min-height:0}',
  '<title-strip></title-strip><nav-toolbar></nav-toolbar><bookmark-bar></bookmark-bar><div class="view"><shop-page></shop-page><scroll-bar></scroll-bar></div><task-bar></task-bar>');
</script>
</body>
</html>
